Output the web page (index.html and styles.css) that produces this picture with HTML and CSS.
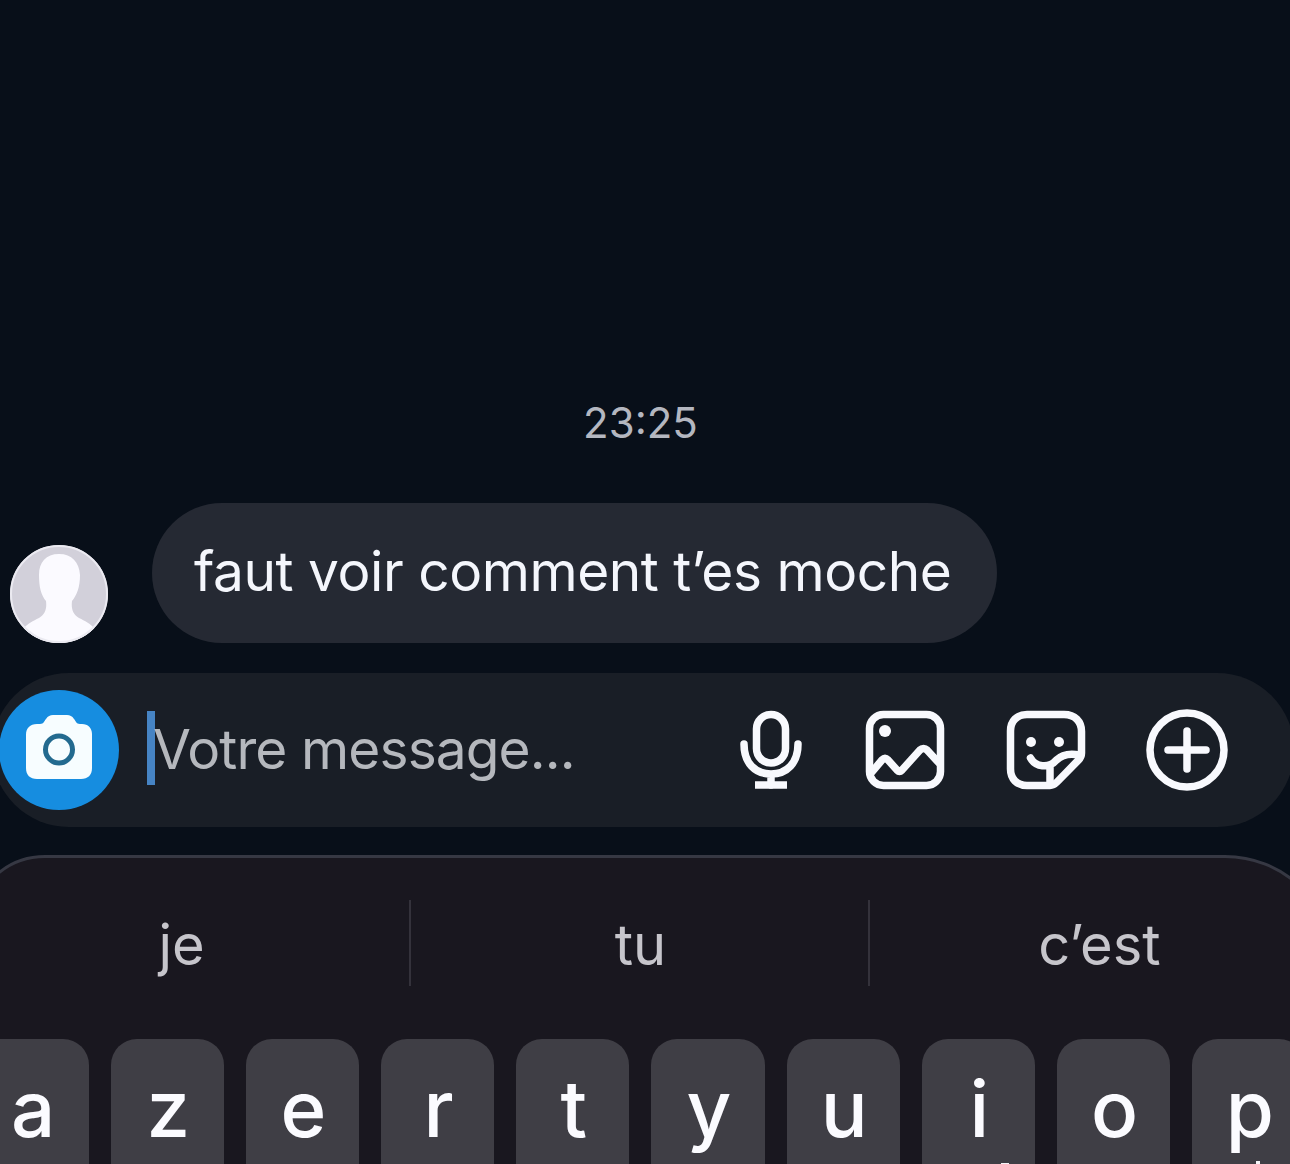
FILE: index.html
```html
<!DOCTYPE html>
<html lang="fr">
<head>
    <meta charset="UTF-8">
    <meta name="viewport" content="width=device-width, initial-scale=1.0">
    <title>Message</title>
    <link rel="stylesheet" href="styles.css">
</head>
<body>
    <div class="screen">
        <div class="thread">
            <div class="time"><span>23:25</span></div>
            <div class="message">
                <svg class="avatar" viewBox="0 0 98 98">
                    <defs>
                        <clipPath id="round"><circle cx="49" cy="49" r="49"/></clipPath>
                    </defs>
                    <g clip-path="url(#round)">
                        <rect width="98" height="98" fill="#d2d0da"/>
                        <path fill="#fbfaff" d="M49 9C36 9 29 17 29 30c0 12 2 20 7 26 1 8-1 13-7 17-6 3-11 5-16 11l10 16h52l10-16c-5-6-10-8-16-11-6-4-8-9-7-17 5-6 8-14 8-26C69 17 62 9 49 9z"/>
                    </g>
                    <circle cx="49" cy="49" r="48" fill="none" stroke="#ebeaf1" stroke-width="2"/>
                </svg>
                <div class="bubble"><span>faut voir comment t’es moche</span></div>
            </div>
        </div>

        <div class="composer">
            <button class="camera" aria-label="Caméra">
                <svg width="66" height="64" viewBox="0 0 66 64">
                    <path fill="#f7fdff" d="M11 9h3c4 0 4-3 6-5 2-3 4-4 7-4h14c3 0 5 1 7 4 2 2 2 5 6 5h2c6 0 10 4 10 10v34c0 7-4 11-11 11H11C4 64 0 60 0 53V20C0 13 4 9 11 9z"/>
                    <circle cx="33" cy="34.5" r="13.5" fill="none" stroke="#236a8f" stroke-width="5"/>
                </svg>
            </button>
            <span class="caret"></span>
            <div class="placeholder"><span>Votre message...</span></div>
            <div class="actions">
                <svg class="mic" width="62" height="80" viewBox="0 0 62 80">
                    <rect x="16.5" y="4.500" width="29" height="48.500" rx="14.500"/>
                    <path d="M4 34c0 19 11 30 27 30s27-11 27-30M31 64v11"/>
                    <path class="foot" d="M15 75h32"/>
                </svg>
                <svg width="80" height="80" viewBox="0 0 80 80">
                    <rect x="4.5" y="4.5" width="71" height="71" rx="14"/>
                    <path d="M6 63l11-13c2-2 4-2 6 0l9 10c2 2 3 2 5 0l18-20c2-2 5-2 7 0l12 13"/>
                    <circle class="dot" cx="20" cy="21" r="6"/>
                </svg>
                <svg width="80" height="80" viewBox="0 0 80 80">
                    <path d="M21 4.500h37c11 0 17.500 7 17.500 17V43c0 3-1 5-3 7L51 72c-2 2-4 3.500-7 3.500H21C11 75.500 4.500 69 4.500 59V21C4.500 11 11 4.500 21 4.500z"/>
                    <path d="M24.500 48c5 9 18 11 26 2 6-6 13-7 23-5M44 57v17"/>
                    <circle class="dot" cx="25" cy="32" r="5"/>
                    <circle class="dot" cx="53" cy="32" r="5"/>
                </svg>
                <svg width="82" height="82" viewBox="0 0 82 82">
                    <circle cx="41" cy="41" r="37"/>
                    <path d="M41 22v38M22 41h38"/>
                </svg>
            </div>
        </div>

        <div class="keyboard">
            <div class="suggestions">
                <span>je</span>
                <span>tu</span>
                <span>c’est</span>
            </div>
            <div class="keys">
                <span class="key">a</span>
                <span class="key">z</span>
                <span class="key">e</span>
                <span class="key">r</span>
                <span class="key">t</span>
                <span class="key">y</span>
                <span class="key">u</span>
                <span class="key">i</span>
                <span class="key">o</span>
                <span class="key">p</span>
            </div>
        </div>
        <span class="speck speck-wide"></span>
        <span class="speck"></span>
    </div>
</body>
</html>
```

FILE: styles.css
```css
body {
    margin: 0;
    background: #080f19;
    font-family: Inter, "Liberation Sans", sans-serif;
}

.screen {
    position: relative;
    display: flex;
    flex-direction: column;
    width: 1290px;
    height: 1164px;
    overflow: hidden;
}

.thread {
    display: flex;
    flex-direction: column;
    justify-content: flex-end;
    box-sizing: border-box;
    height: 673px;
    padding: 0 10px 30px;
    flex-shrink: 0;
}

.time {
    margin-bottom: 55px;
    padding-right: 9px;
    color: #b4b7c0;
    font-size: 42px;
    line-height: 50px;
    text-align: center;
}

.message {
    display: flex;
    align-items: flex-end;
    gap: 44px;
}

.avatar {
    width: 98px;
    height: 98px;
}

.bubble {
    box-sizing: border-box;
    width: 845px;
    height: 140px;
    padding: 35px 0 0 42px;
    border-radius: 70px;
    background: #252933;
    color: #f4f6fc;
    font-size: 55px;
    line-height: 66px;
    letter-spacing: -0.45px;
    white-space: nowrap;
}

.composer {
    display: flex;
    align-items: center;
    box-sizing: border-box;
    height: 154px;
    flex-shrink: 0;
    margin: 0 -4px 29px -8px;
    padding: 0 66px 0 7px;
    border-radius: 77px;
    background: #191e26;
}

.camera {
    display: flex;
    align-items: center;
    justify-content: center;
    width: 120px;
    height: 120px;
    padding: 0 0 6px;
    box-sizing: border-box;
    border: none;
    border-radius: 50%;
    background: #168de0;
}

.caret {
    width: 8px;
    height: 74px;
    margin: 0 -2px 4px 28px;
    background: #4684c4;
}

.placeholder {
    padding-bottom: 3px;
    color: #b5b8bd;
    font-size: 55px;
    line-height: 66px;
    letter-spacing: -0.9px;
    white-space: nowrap;
}

.actions {
    display: flex;
    align-items: center;
    gap: 60.5px;
    margin-left: auto;
}

.actions svg {
    fill: none;
    stroke: #f8f9fd;
    stroke-width: 7.5;
    stroke-linecap: round;
    stroke-linejoin: round;
}

.actions .mic {
    margin-right: 2.5px;
}

.actions .dot {
    fill: #f8f9fd;
    stroke: none;
}

.actions .foot {
    stroke-linecap: butt;
}

.keyboard {
    height: 400px;
    flex-shrink: 0;
    box-sizing: border-box;
    margin: -1px -46px 0 -30px;
    border: 3px solid #363843;
    border-radius: 75px 111px 0 0;
    background: #19171f;
}

.suggestions {
    display: grid;
    grid-template-columns: repeat(3, 459px);
    margin: 42px 0 53px -21px;
    color: #c6c5cb;
    font-size: 56px;
    line-height: 86px;
    text-align: center;
}

.suggestions span {
    box-sizing: border-box;
    height: 86px;
    padding-top: 2px;
}

.suggestions span + span {
    border-left: 2px solid #34323b;
    margin-left: -2px;
}

.keys {
    display: grid;
    grid-template-columns: repeat(10, 113.2px);
    gap: 22px;
    margin-left: 2.5px;
}

.key {
    box-sizing: border-box;
    height: 180px;
    padding-left: 2px;
    border-radius: 26px;
    background: #3f3e45;
    color: #fbfbff;
    font-size: 78px;
    font-weight: 450;
    line-height: 140px;
    text-align: center;
}

/* tips of the row below, just cut by the screen edge */
.speck {
    position: absolute;
    left: 1256px;
    bottom: 0;
    width: 4px;
    height: 3px;
    background: #f4f4f8;
}

.speck-wide {
    left: 1001px;
    width: 8px;
    height: 1px;
}
```
